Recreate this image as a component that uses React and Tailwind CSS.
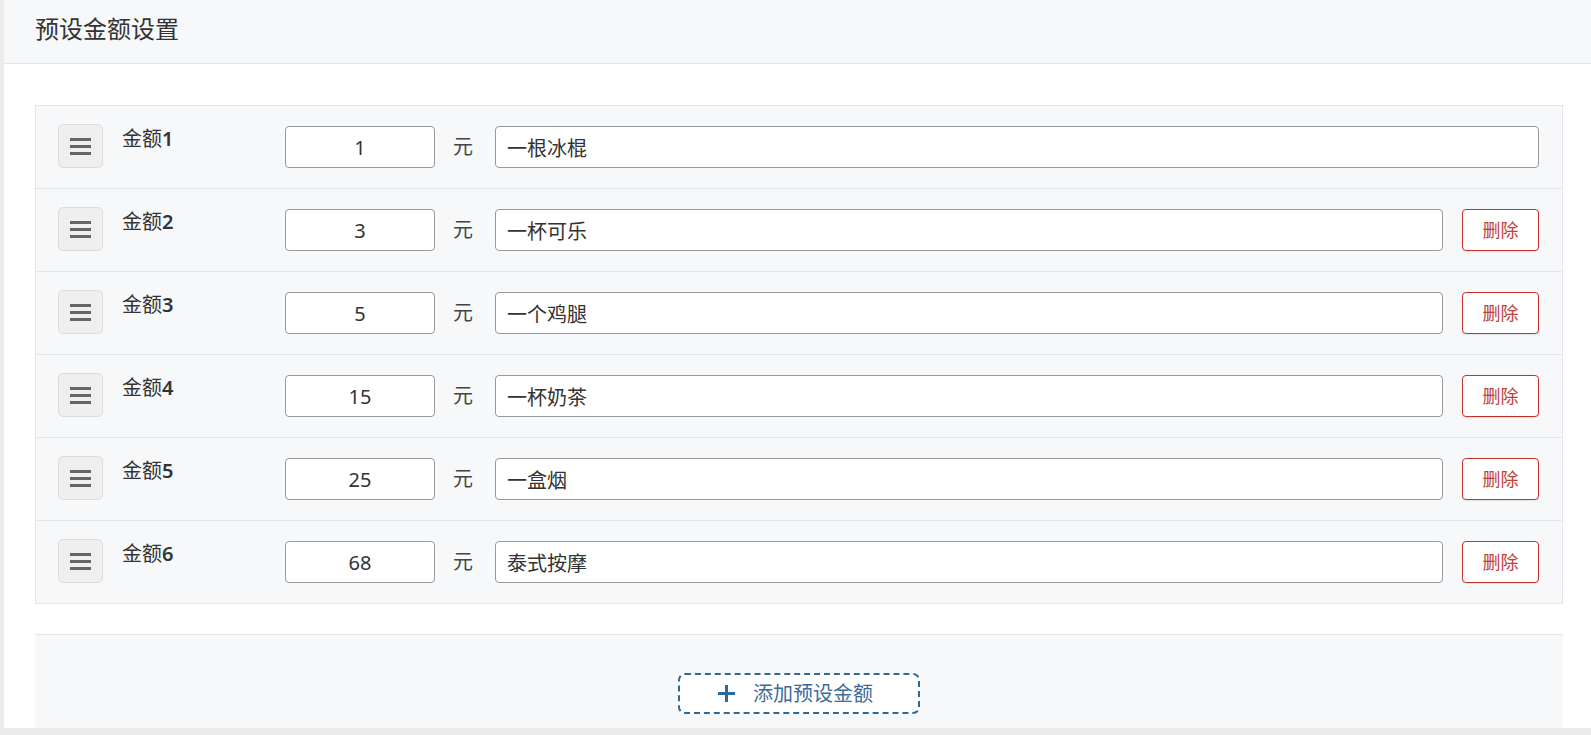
import { useState } from "react";

const initialItems = [
  { id: 1, amount: "1", desc: "一根冰棍" },
  { id: 2, amount: "3", desc: "一杯可乐" },
  { id: 3, amount: "5", desc: "一个鸡腿" },
  { id: 4, amount: "15", desc: "一杯奶茶" },
  { id: 5, amount: "25", desc: "一盒烟" },
  { id: 6, amount: "68", desc: "泰式按摩" },
];

function Handle() {
  return (
    <div className="w-[45px] h-[44px] shrink-0 rounded-[5px] border border-[#dcdcdc] bg-[#efefef] flex flex-col items-center justify-center gap-[4px]">
      <span className="block w-[21px] h-[3px] bg-[#666]" />
      <span className="block w-[21px] h-[3px] bg-[#666]" />
      <span className="block w-[21px] h-[3px] bg-[#666]" />
    </div>
  );
}

export default function App() {
  const [items, setItems] = useState(initialItems);

  const update = (id, key, value) => {
    setItems(items.map((it) => (it.id === id ? { ...it, [key]: value } : it)));
  };

  const remove = (id) => setItems(items.filter((it) => it.id !== id));

  const add = () => {
    const next = items.length ? Math.max(...items.map((i) => i.id)) + 1 : 1;
    setItems([...items, { id: next, amount: "", desc: "" }]);
  };

  return (
    <div className="min-h-screen bg-[#ececec] pl-[4px] pb-[5px] text-[#333] font-['Noto_Sans','Noto_Sans_CJK_SC',sans-serif]">
      <div className="bg-white">
        <div className="h-[64px] bg-[#f7f8fa] border-b border-[#e4e6ea] pl-[31px] flex items-center">
          <h2 className="text-[24px] leading-none -mt-[6px] text-[#333]">预设金额设置</h2>
        </div>

        <div className="pt-[41px] pl-[31px] pr-[28px]">
          <div className="border border-[#e4e6ea] bg-[#f7f8fa]">
            {items.map((it, idx) => (
              <div
                key={it.id}
                className={`h-[64px] box-content flex items-start pl-[22px] pr-[23px] pt-[18px] ${idx < items.length - 1 ? "border-b border-[#e4e6ea]" : ""}`}
              >
                <Handle />
                <div className="ml-[19px] w-[144px] text-[20px] leading-[28px] pt-[1px] text-[#333]">
                  金额<span className="font-semibold">{idx + 1}</span>
                </div>
                <input
                  className="ml-[19px] mt-[2px] w-[150px] h-[42px] rounded-[4px] border border-[#999] bg-white text-center text-[20px] text-[#333] outline-none"
                  value={it.amount}
                  onChange={(e) => update(it.id, "amount", e.target.value)}
                />
                <span className="ml-[18px] mt-[2px] h-[42px] flex items-center text-[20px] text-[#444]">元</span>
                <input
                  className="ml-[22px] mt-[2px] flex-1 h-[42px] rounded-[4px] border border-[#999] bg-white px-[11px] text-[20px] text-[#333] outline-none"
                  value={it.desc}
                  onChange={(e) => update(it.id, "desc", e.target.value)}
                />
                {idx > 0 && (
                  <button
                    onClick={() => remove(it.id)}
                    className="ml-[19px] mt-[2px] w-[77px] h-[42px] rounded-[4px] border border-[#c9302c] bg-white text-[18px] text-[#c0413b] shadow-[0_1px_1px_rgba(0,0,0,0.08)]"
                  >
                    删除
                  </button>
                )}
              </div>
            ))}
          </div>

          <div className="mt-[30px] border-t border-[#e4e6ea] bg-[#f7f8fa] pt-[38px] pb-[14px] flex justify-center">
            <button
              onClick={add}
              className="w-[242px] h-[41px] rounded-[7px] border-2 border-dashed border-[#2c6a9c] bg-white flex items-center justify-center gap-[17px] text-[20px] text-[#3b6b96]"
            >
              <svg width="19" height="19" viewBox="0 0 19 19" className="-ml-[8px]">
                <path d="M9.5 1v17M1 9.5h17" stroke="#2c6a9c" strokeWidth="3" />
              </svg>
              添加预设金额
            </button>
          </div>
        </div>
      </div>
    </div>
  );
}
